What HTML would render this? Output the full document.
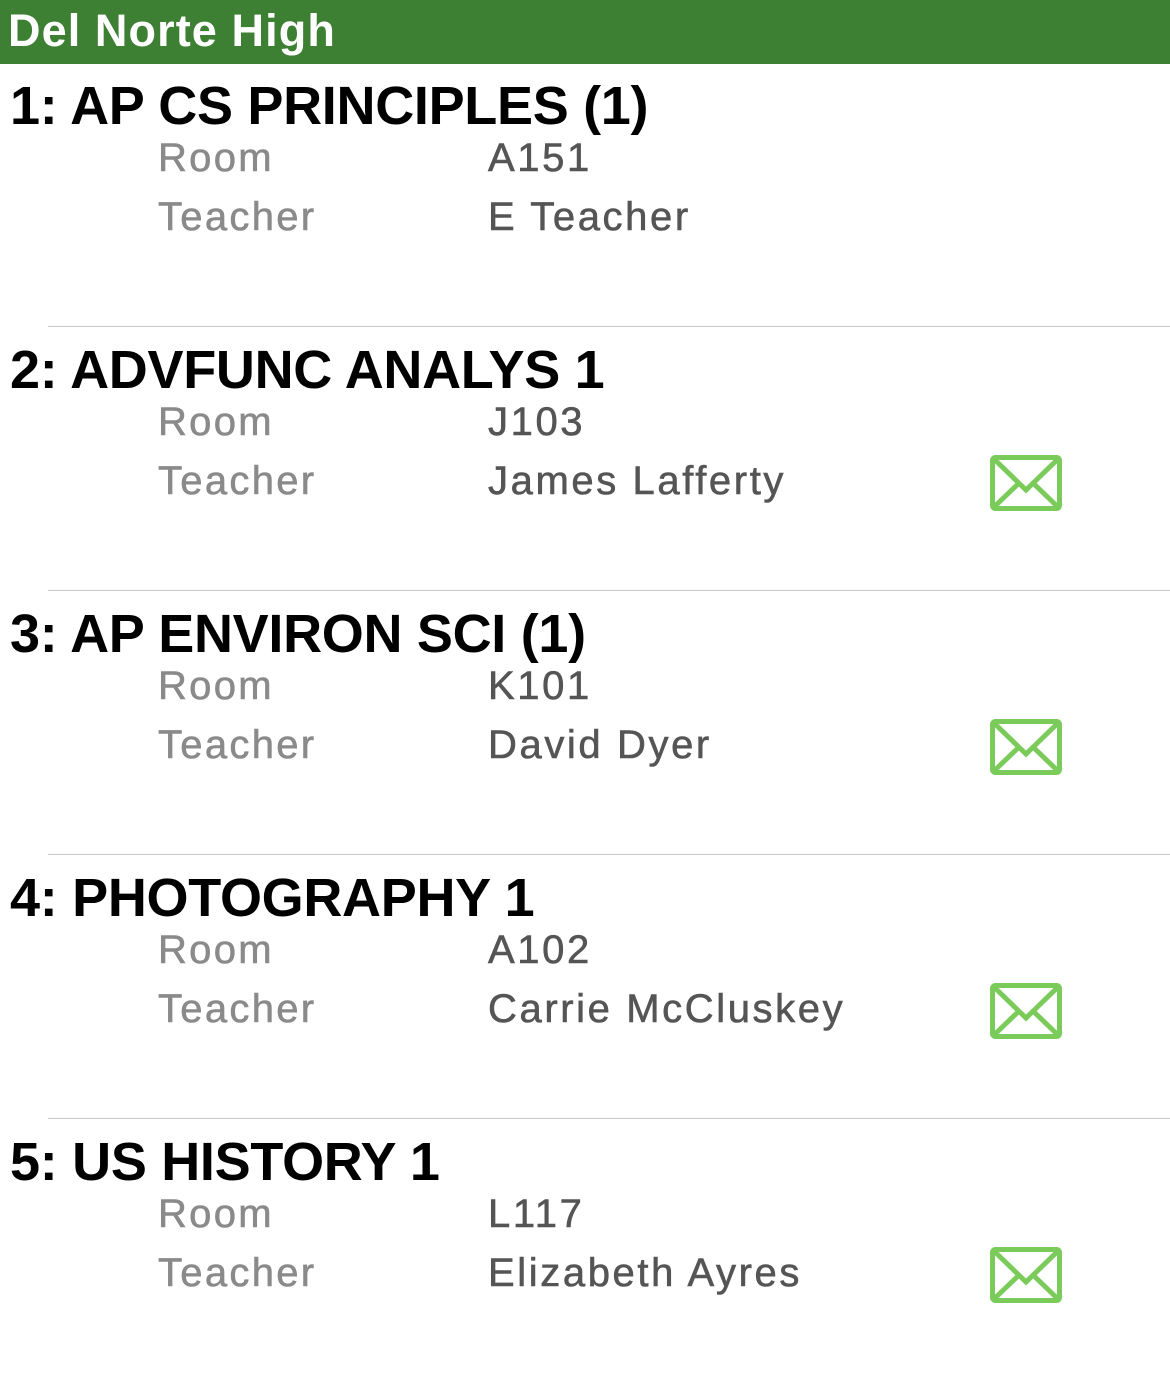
<!DOCTYPE html>
<html><head><style>
html,body{margin:0;width:1170px;height:1383px;overflow:hidden}
body{background:#fff;font-family:"Liberation Sans",Arial,sans-serif;position:relative}
.hdr{position:absolute;left:0;top:0;width:1170px;height:64px;background:#3d8033}
.hdr span{position:absolute;left:8px;top:3px;color:#fff;font-weight:bold;font-size:45px;line-height:56px;letter-spacing:1.1px}
.sec{position:absolute;left:0;width:1170px;height:264px}
.t{position:absolute;left:10px;top:74px;font-weight:bold;font-size:54px;line-height:64px;color:#000;white-space:nowrap;letter-spacing:-0.3px}
.l{position:absolute;left:158px;font-size:40px;color:#8a8a8a;line-height:48px;letter-spacing:2.3px;-webkit-text-stroke:0.6px #8a8a8a}
.v{position:absolute;left:488px;font-size:40px;color:#555;line-height:48px;white-space:nowrap;letter-spacing:2.6px;-webkit-text-stroke:0.6px #555}
.r1{top:134px}.r2{top:193px}
.sep{position:absolute;left:48px;right:0;top:326px;height:1px;background:#c8c8c8}
svg{position:absolute;left:990px;top:191px}
</style></head><body>
<div class="hdr"><span>Del Norte High</span></div>

<div class="sec" style="top:0">
<div class="t">1: AP CS PRINCIPLES (1)</div>
<div class="l r1">Room</div><div class="v r1">A151</div>
<div class="l r2">Teacher</div><div class="v r2">E Teacher</div>
<div class="sep"></div>
</div>

<div class="sec" style="top:264px">
<div class="t">2: ADVFUNC ANALYS 1</div>
<div class="l r1">Room</div><div class="v r1">J103</div>
<div class="l r2">Teacher</div><div class="v r2">James Lafferty</div>
<svg width="72" height="56" viewBox="0 0 72 56"><rect x="2.5" y="2.5" width="67" height="51" rx="3" fill="none" stroke="#7acb5a" stroke-width="5"/><path d="M3 3 L36 35 L69 3 M3 53 L29 28 M69 53 L43 28" fill="none" stroke="#7acb5a" stroke-width="5"/></svg>
<div class="sep"></div>
</div>

<div class="sec" style="top:528px">
<div class="t">3: AP ENVIRON SCI (1)</div>
<div class="l r1">Room</div><div class="v r1">K101</div>
<div class="l r2">Teacher</div><div class="v r2">David Dyer</div>
<svg width="72" height="56" viewBox="0 0 72 56"><rect x="2.5" y="2.5" width="67" height="51" rx="3" fill="none" stroke="#7acb5a" stroke-width="5"/><path d="M3 3 L36 35 L69 3 M3 53 L29 28 M69 53 L43 28" fill="none" stroke="#7acb5a" stroke-width="5"/></svg>
<div class="sep"></div>
</div>

<div class="sec" style="top:792px">
<div class="t">4: PHOTOGRAPHY 1</div>
<div class="l r1">Room</div><div class="v r1">A102</div>
<div class="l r2">Teacher</div><div class="v r2">Carrie McCluskey</div>
<svg width="72" height="56" viewBox="0 0 72 56"><rect x="2.5" y="2.5" width="67" height="51" rx="3" fill="none" stroke="#7acb5a" stroke-width="5"/><path d="M3 3 L36 35 L69 3 M3 53 L29 28 M69 53 L43 28" fill="none" stroke="#7acb5a" stroke-width="5"/></svg>
<div class="sep"></div>
</div>

<div class="sec" style="top:1056px">
<div class="t">5: US HISTORY 1</div>
<div class="l r1">Room</div><div class="v r1">L117</div>
<div class="l r2">Teacher</div><div class="v r2">Elizabeth Ayres</div>
<svg width="72" height="56" viewBox="0 0 72 56"><rect x="2.5" y="2.5" width="67" height="51" rx="3" fill="none" stroke="#7acb5a" stroke-width="5"/><path d="M3 3 L36 35 L69 3 M3 53 L29 28 M69 53 L43 28" fill="none" stroke="#7acb5a" stroke-width="5"/></svg>
</div>
</body></html>
